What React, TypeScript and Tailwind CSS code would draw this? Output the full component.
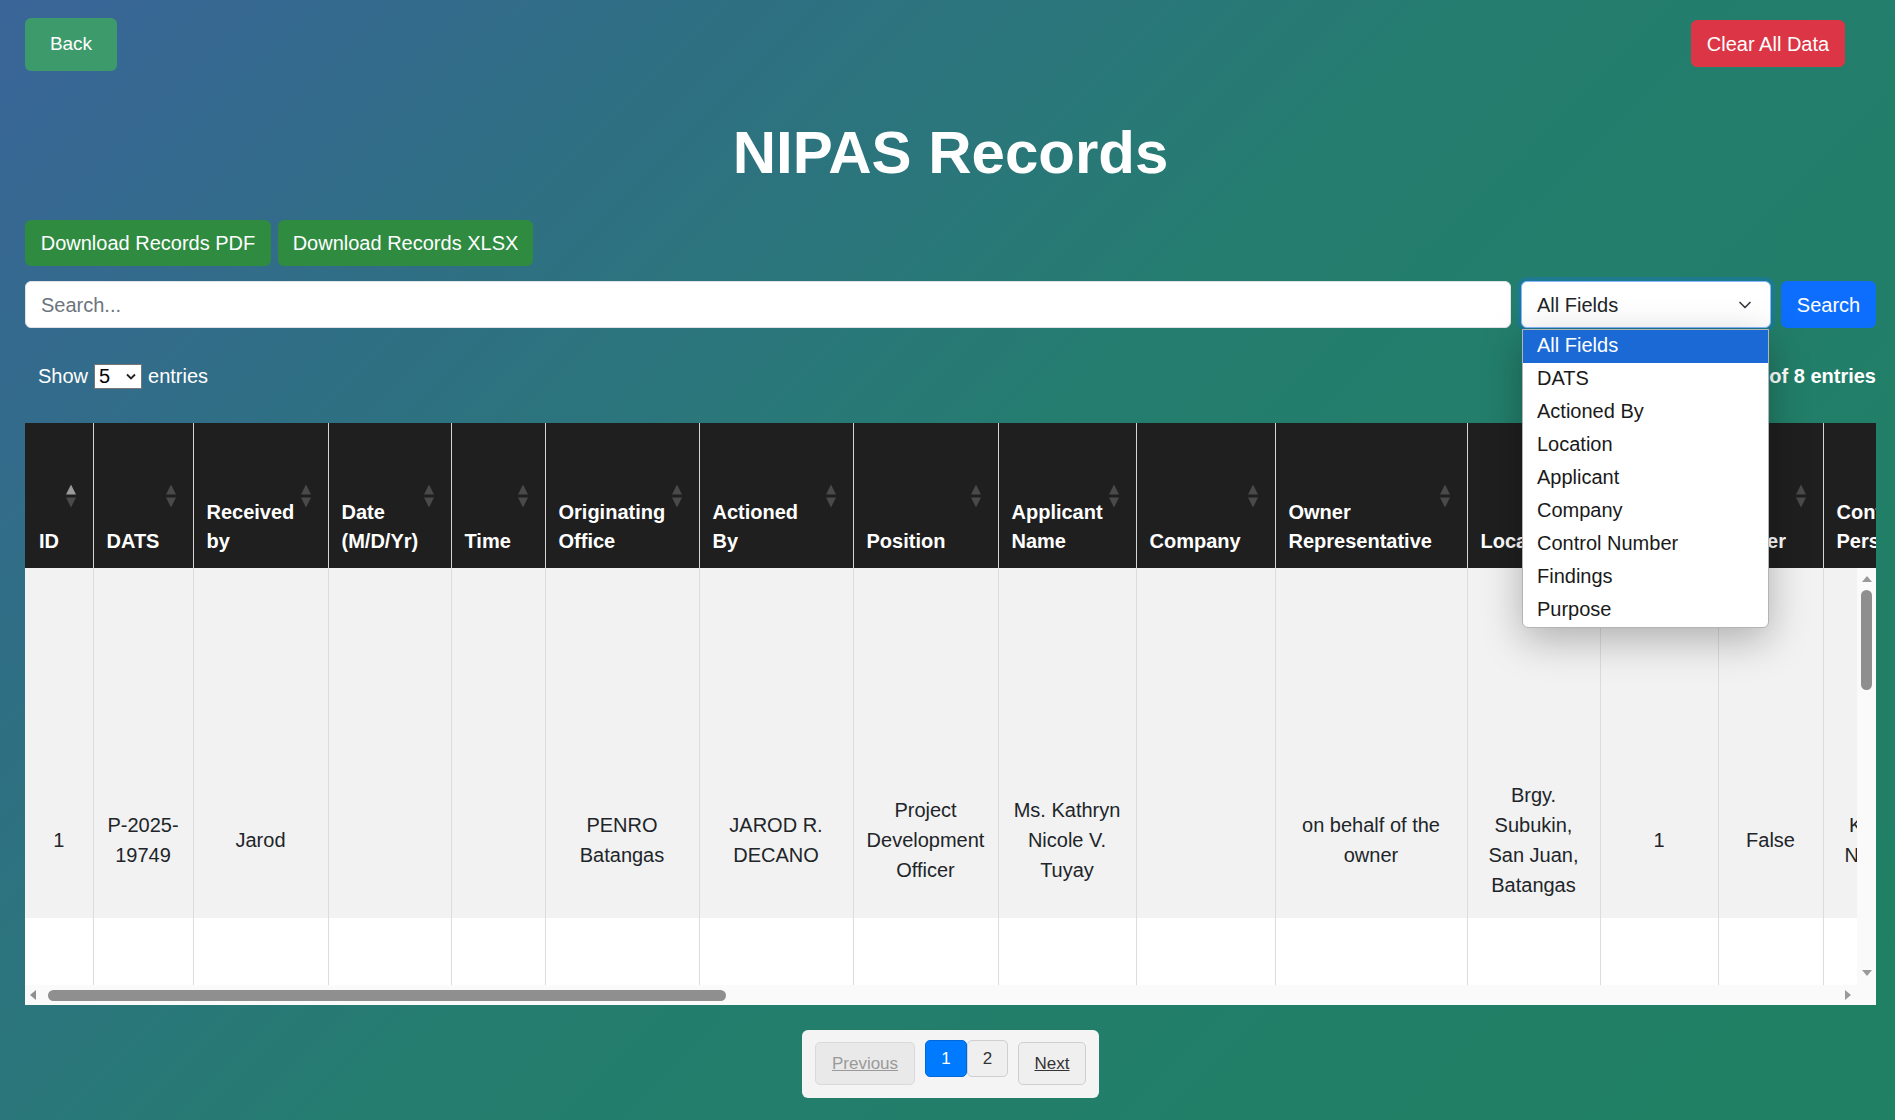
import React from 'react';

type Col = { label: string; w: number; active?: boolean };

const columns: Col[] = [
  { label: 'ID', w: 68, active: true },
  { label: 'DATS', w: 100 },
  { label: 'Received by', w: 135 },
  { label: 'Date (M/D/Yr)', w: 123 },
  { label: 'Time', w: 94 },
  { label: 'Originating Office', w: 154 },
  { label: 'Actioned By', w: 154 },
  { label: 'Position', w: 145 },
  { label: 'Applicant Name', w: 138 },
  { label: 'Company', w: 139 },
  { label: 'Owner Representative', w: 192 },
  { label: 'Location', w: 133 },
  { label: 'Quantity', w: 118 },
  { label: 'Order', w: 105 },
  { label: 'Contact Person', w: 121 },
  { label: 'Contact Number', w: 150 },
  { label: 'Findings', w: 320 },
  { label: 'Purpose', w: 320 },
  { label: 'Remarks', w: 220 },
  { label: 'Actions', w: 180 },
];

const row: string[] = [
  '1',
  'P-2025-19749',
  'Jarod',
  '',
  '',
  'PENRO Batangas',
  'JAROD R. DECANO',
  'Project Development Officer',
  'Ms. Kathryn Nicole V. Tuyay',
  '',
  'on behalf of the owner',
  'Brgy. Subukin, San Juan, Batangas',
  '1',
  'False',
  'Kathryn Nicole V.',
  '09171234567',
  'For verification',
  'Tree cutting permit',
  '',
  '',
];

const fields = [
  'All Fields',
  'DATS',
  'Actioned By',
  'Location',
  'Applicant',
  'Company',
  'Control Number',
  'Findings',
  'Purpose',
];

const tableWidth = columns.reduce((s, c) => s + c.w, 0);

function SortIcon({ active }: { active?: boolean }) {
  return (
    <svg
      width="10"
      height="23"
      viewBox="0 0 10 23"
      className="absolute right-[17px] top-1/2 -translate-y-1/2"
    >
      <polygon points="0,10 5,0 10,10" fill={active ? '#9b9b9b' : '#4a4a4a'} />
      <polygon points="0,13 10,13 5,23" fill="#4a4a4a" />
    </svg>
  );
}

function ColGroup() {
  return (
    <colgroup>
      {columns.map((c) => (
        <col key={c.label} style={{ width: c.w }} />
      ))}
    </colgroup>
  );
}

export default function App() {
  return (
    <div className="min-h-screen bg-[linear-gradient(135deg,#3a6599_0%,#2f6f84_23%,#2a777a_38%,#247d6e_50%,#1f8062_100%)] pl-[25px] pr-[19px] pt-[18px] pb-[22px] font-['Liberation_Sans',Arial,sans-serif]">
      {/* Top bar */}
      <div className="flex items-start justify-between">
        <button className="h-[53px] w-[92px] rounded-[6px] bg-[#3d9a6b] text-[19px] text-white">
          Back
        </button>
        <button className="mr-[31px] mt-[2px] h-[47px] w-[154px] rounded-[6px] bg-[#dc3545] text-[20px] text-white">
          Clear All Data
        </button>
      </div>

      {/* Title */}
      <h1 className="mt-[49px] text-center text-[60px] font-bold leading-[66px] text-white">
        NIPAS Records
      </h1>

      {/* Downloads */}
      <div className="mt-[34px] flex gap-[7px]">
        <button className="h-[46px] w-[246px] rounded-[6px] bg-[#2e8b40] text-[20px] text-white">
          Download Records PDF
        </button>
        <button className="h-[46px] w-[255px] rounded-[6px] bg-[#2e8b40] text-[20px] text-white">
          Download Records XLSX
        </button>
      </div>

      {/* Search row */}
      <div className="mt-[15px] flex gap-[10px]">
        <div className="flex h-[47px] flex-1 items-center rounded-[6px] border border-[#dee2e6] bg-white pl-[15px] text-[20px] text-[#6c757d]">
          Search...
        </div>
        <div className="relative w-[250px]">
          <div className="flex h-[47px] items-center justify-between rounded-[6px] border border-[#86b7fe] bg-white pl-[15px] pr-[18px] text-[20px] text-[#212529] shadow-[0_0_0_4px_rgba(13,110,253,0.25)]">
            <span>All Fields</span>
            <svg width="14" height="10" viewBox="0 0 16 12" fill="none">
              <path d="M2 3l6 6 6-6" stroke="#343a40" strokeWidth="2" strokeLinecap="round" strokeLinejoin="round" />
            </svg>
          </div>
          <div className="absolute left-[1px] top-[48px] z-20 w-[247px] overflow-hidden rounded-b-[6px] border border-[#b4b4b4] bg-white shadow-[0_12px_40px_rgba(0,0,0,0.28)]">
            {fields.map((f, i) => (
              <div
                key={f}
                className={
                  i === 0
                    ? 'flex h-[33px] items-center bg-[#1a69d5] pb-[3px] pl-[14px] text-[20px] text-white'
                    : 'flex h-[33px] items-center pb-[3px] pl-[14px] text-[20px] text-[#1a1a1a]'
                }
              >
                {f}
              </div>
            ))}
          </div>
        </div>
        <button className="h-[47px] w-[95px] rounded-[6px] bg-[#0d6efd] text-[20px] text-white">
          Search
        </button>
      </div>

      {/* Length + info */}
      <div className="mt-[33px] flex h-[30px] items-center justify-between text-[20px] text-white">
        <div className="flex items-center pl-[13px]">
          <span>Show</span>
          <div className="mx-[6px] flex h-[25px] w-[48px] items-center justify-between border border-[#767676] bg-white pl-[4px] pr-[5px] text-[20px] text-black">
            <span className="leading-none">5</span>
            <svg width="10" height="7" viewBox="0 0 10 7" fill="none">
              <path d="M1 1.5l4 4 4-4" stroke="#222" strokeWidth="1.8" />
            </svg>
          </div>
          <span>entries</span>
        </div>
        <div className="font-bold">Showing 1 to 5 of 8 entries</div>
      </div>

      {/* Table */}
      <div className="mt-[32px]">
        {/* head */}
        <div className="overflow-hidden bg-[#201f20]">
          <table className="table-fixed border-collapse text-white" style={{ width: tableWidth }}>
            <ColGroup />
            <thead>
              <tr>
                {columns.map((c, i) => (
                  <th
                    key={c.label}
                    className={
                      i === 0
                        ? 'relative h-[145px] pb-[12px] pl-[14px] pr-[30px] text-left align-bottom text-[20px] font-bold leading-[29px]'
                        : 'relative h-[145px] border-l border-[#d4d4d4] pb-[12px] pl-[13px] pr-[30px] text-left align-bottom text-[20px] font-bold leading-[29px]'
                    }
                  >
                    {c.label}
                    <SortIcon active={c.active} />
                  </th>
                ))}
              </tr>
            </thead>
          </table>
        </div>

        {/* body */}
        <div className="bg-white">
          <div className="flex h-[417px]">
            <div className="flex-1 overflow-hidden">
              <table className="table-fixed border-collapse text-[#212529]" style={{ width: tableWidth }}>
                <ColGroup />
                <tbody>
                  <tr className="bg-[#f2f2f2]">
                    {row.map((v, i) => (
                      <td
                        key={i}
                        className={
                          i === 0
                            ? 'h-[350px] px-[12px] pb-[10px] pt-[204px] text-center align-middle text-[20px] leading-[30px]'
                            : 'h-[350px] border-l border-[#dcdcdc] px-[12px] pb-[10px] pt-[204px] text-center align-middle text-[20px] leading-[30px]'
                        }
                      >
                        {v}
                      </td>
                    ))}
                  </tr>
                  <tr className="bg-white">
                    {columns.map((c, i) => (
                      <td
                        key={c.label}
                        className={i === 0 ? 'h-[300px]' : 'h-[300px] border-l border-[#dcdcdc]'}
                      />
                    ))}
                  </tr>
                </tbody>
              </table>
            </div>
            {/* vertical scrollbar */}
            <div className="flex w-[19px] flex-col items-center bg-[#fafafa] pt-[8px]">
              <svg width="10" height="6" viewBox="0 0 10 6">
                <polygon points="0,6 5,0 10,6" fill="#9a9a9a" />
              </svg>
              <div className="mt-[8px] h-[100px] w-[11px] rounded-full bg-[#8f8f8f]" />
              <div className="flex-1" />
              <svg width="10" height="6" viewBox="0 0 10 6" className="mb-[9px]">
                <polygon points="0,0 10,0 5,6" fill="#9a9a9a" />
              </svg>
            </div>
          </div>
          {/* horizontal scrollbar */}
          <div className="flex h-[20px] items-center bg-[#fafafa] pl-[5px]">
            <svg width="6" height="10" viewBox="0 0 6 10">
              <polygon points="6,0 6,10 0,5" fill="#8f8f8f" />
            </svg>
            <div className="ml-[12px] h-[11px] w-[678px] rounded-full bg-[#8f8f8f]" />
            <div className="flex-1" />
            <svg width="6" height="10" viewBox="0 0 6 10" className="mr-[25px]">
              <polygon points="0,0 6,5 0,10" fill="#9a9a9a" />
            </svg>
          </div>
        </div>
      </div>

      {/* Pagination */}
      <div className="mt-[25px] flex justify-center">
        <div className="flex items-start gap-[10px] rounded-[6px] bg-[#f4f4f4] px-[13px] pb-[13px] pt-[12px]">
          <button className="h-[43px] w-[100px] rounded-[5px] border border-[#d9d9d9] bg-[#e9e9e9] text-[17px] text-[#9a9a9a] underline">
            Previous
          </button>
          <div className="-mt-[2px] flex">
            <button className="h-[37px] w-[42px] rounded-[5px] border border-[#0069d9] bg-[#007bff] text-[17px] text-white">
              1
            </button>
            <button className="h-[37px] w-[41px] rounded-[5px] border border-[#cfcfcf] bg-[#efefef] text-[17px] text-[#333]">
              2
            </button>
          </div>
          <button className="h-[43px] w-[68px] rounded-[5px] border border-[#cfcfcf] bg-[#efefef] text-[17px] text-[#333] underline">
            Next
          </button>
        </div>
      </div>
    </div>
  );
}
